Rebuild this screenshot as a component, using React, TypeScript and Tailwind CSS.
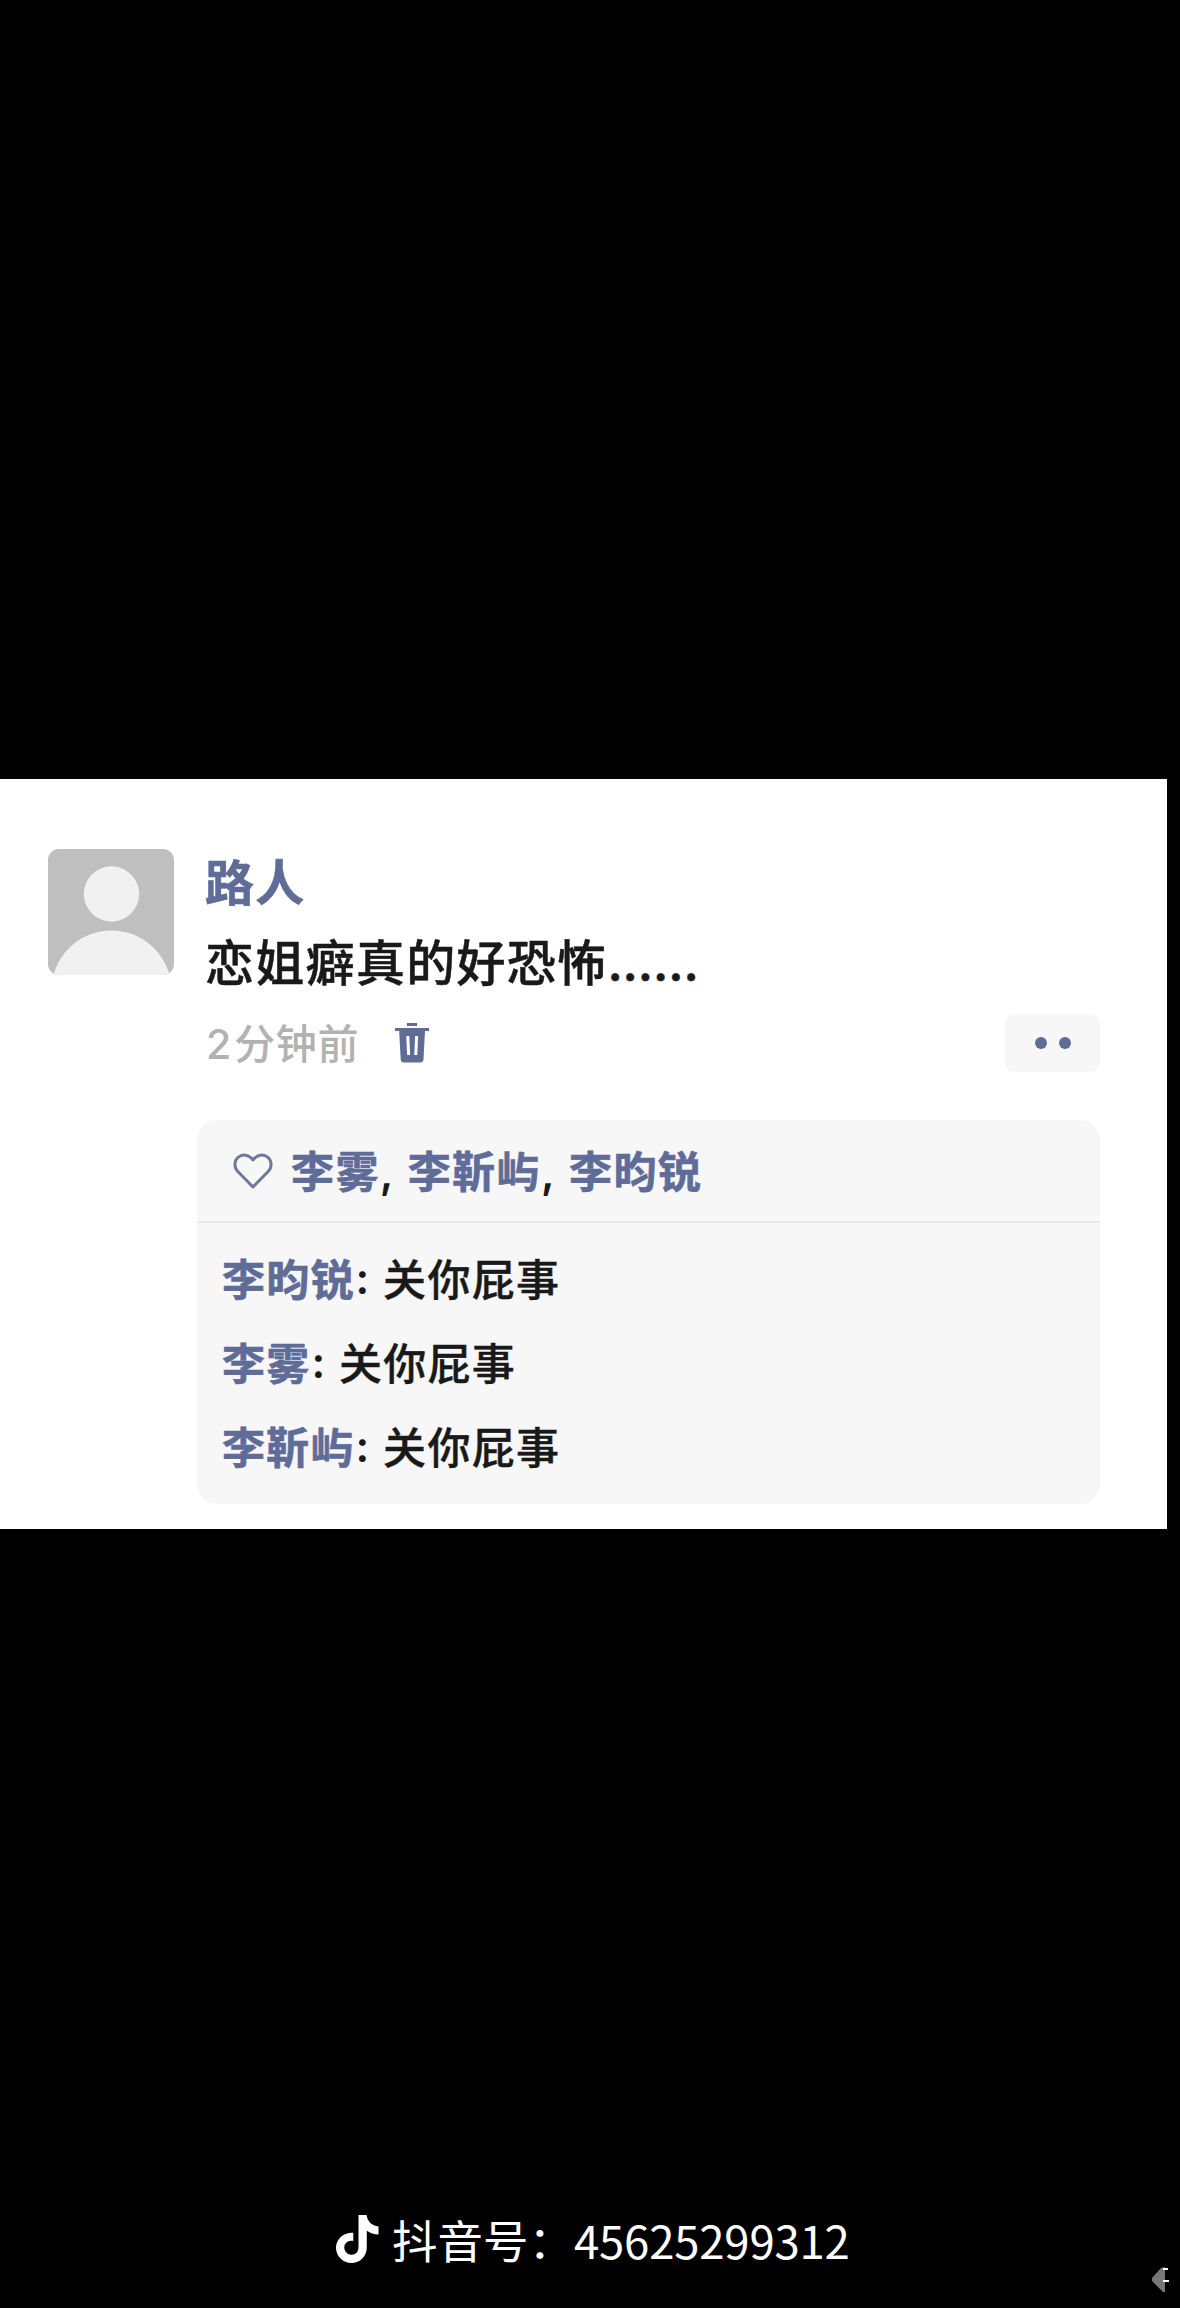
import React from "react";

const likes = ["李雾", "李靳屿", "李昀锐"];

const comments = [
  { name: "李昀锐", text: "关你屁事" },
  { name: "李雾", text: "关你屁事" },
  { name: "李靳屿", text: "关你屁事" },
];

function Avatar() {
  return (
    <div className="w-[126px] h-[126px] rounded-[11px] overflow-hidden bg-[#bfbfbf] shrink-0">
      <svg viewBox="0 0 126 126" className="w-full h-full" fill="#f1f1f1">
        <circle cx="63.500" cy="45" r="27.700" />
        <circle cx="63.500" cy="141.500" r="60" />
      </svg>
    </div>
  );
}

function Trash() {
  return (
    <svg width="34" height="40" viewBox="0 0 34 40" className="ml-[36px]" fill="#5f6c98">
      <path d="M12 0h10v3H12z" />
      <path d="M0 5h34v3h-4L28.500 36.500q-.3 3-3.300 3H9q-3 0-3.300-3L4.200 8H0z" />
      <path d="M12.800 13l.8 19M21.600 13l-.8 19" stroke="#fff" strokeWidth="3" />
    </svg>
  );
}

function Heart() {
  return (
    <svg width="40" height="36" viewBox="0 0 40 36" className="mr-[18px]" fill="none" stroke="#6f7899" strokeWidth="3" strokeLinejoin="round">
      <path d="M20 34L4.800 18.500C1 14.500 1 8 4.800 4.500C8.800 .8 14.500 1.200 18 4.800L20 7L22 4.800C25.500 1.200 31.200 .8 35.200 4.500C39 8 39 14.500 35.200 18.500Z" />
    </svg>
  );
}

function Note() {
  return (
    <svg width="43" height="48" viewBox="0 0 43 48" fill="#fff">
      <path d="M22.500 0H30.500C31.500 6.500 36 10.800 42.500 11.500V19.500C38 19.500 34 18.200 30.800 15.800V32C30.800 41.500 24 48 15.500 48C7 48 0 41.300 0 32.800C0 24 7.500 17 17.300 17.700V26C12.500 24.700 8.300 28 8.300 32.500C8.300 36.500 11.500 39.700 15.500 39.700C19.800 39.700 22.500 36.800 22.500 32Z" />
    </svg>
  );
}

function App() {
  return (
    <div className="relative flex flex-col w-[1180px] h-[2308px] pt-[779px] bg-black overflow-hidden font-['Inter','Noto_Sans_CJK_SC',sans-serif] whitespace-nowrap">
      <div className="flex w-[1167px] h-[750px] bg-white pl-[48px] pt-[70px]">
        <Avatar />
        <div className="flex flex-col w-[903px] ml-[23px]">
          <p className="h-[68px] mt-[1px] pl-[8px] text-[49px] leading-[68px] font-bold tracking-[1.200px] text-[#5f6c98] [-webkit-text-stroke:0.6px_#5f6c98]">
            路人
          </p>
          <p className="flex h-[82px] pl-[8px] mt-[8px] text-[49px] leading-[76px] font-medium tracking-[1.300px] text-[#191919] [-webkit-text-stroke:0.5px_#191919]">
            恋姐癖真的好恐怖
            <span className="text-[48px] font-semibold tracking-[-0.100px]">......</span>
          </p>
          <div className="flex items-center h-[58px] mt-[6px] pl-[9px]">
            <p className="flex w-[153px] pt-[2px] text-[41px] leading-[58px] text-[#b2b2b2] font-medium">
              <span className="w-[31px]">2</span>
              <span className="tracking-[0.600px]">分钟前</span>
            </p>
            <Trash />
            <button className="flex items-center justify-center gap-[12px] w-[95px] h-[58px] ml-auto rounded-[9px] bg-[#f7f7f7]">
              <span className="w-[12px] h-[12px] rounded-full bg-[#5f6c98]"></span>
              <span className="w-[12px] h-[12px] rounded-full bg-[#5f6c98]"></span>
            </button>
          </div>

          <div className="h-[384px] mt-[48px] rounded-[20px] bg-[#f7f7f7] text-[43px]">
            <div className="flex items-center h-[103px] pl-[36px] border-b-2 border-[#e9e9e9]">
              <Heart />
              {likes.map((name, i) => (
                <p key={name} className="flex pt-[3px] leading-[60px]">
                  <span className="font-bold tracking-[1.400px] text-[#5f6c98] [-webkit-text-stroke:0.6px_#5f6c98]">{name}</span>
                  {i < likes.length - 1 && (
                    <span className="w-[28px] font-semibold text-[#191919]">,</span>
                  )}
                </p>
              ))}
            </div>
            <div className="flex flex-col pt-[15px] pl-[25px]">
              {comments.map((item) => (
                <p key={item.name} className="flex h-[84px] leading-[84px]">
                  <span className="font-bold tracking-[1.200px] text-[#5f6c98] [-webkit-text-stroke:0.6px_#5f6c98]">{item.name}</span>
                  <span className="w-[28.500px] h-[84px] pl-px leading-[80px] font-semibold text-[#191919]">:</span>
                  <span className="font-medium tracking-[1.300px] text-[#191919] [-webkit-text-stroke:0.4px_#191919]">{item.text}</span>
                </p>
              ))}
            </div>
          </div>
        </div>
      </div>

      <div className="flex items-center h-[66px] mt-[677px] pl-[336px] font-['Noto_Sans_CJK_SC',sans-serif] text-[45.500px] text-white">
        <Note />
        <p className="ml-[13px] leading-[66px]">
          抖音号：<span className="tracking-[-0.200px]">45625299312</span>
        </p>
      </div>

      <svg className="absolute left-[1150px] top-[2264px]" width="22" height="32" viewBox="0 0 22 32">
        <path d="M15 3v25h-2L2 17v-3L11 4z" fill="#777" />
        <path d="M13 4h5v2h-5zM13 16h6v2h-6z" fill="#fff" />
      </svg>
    </div>
  );
}

export default App;
